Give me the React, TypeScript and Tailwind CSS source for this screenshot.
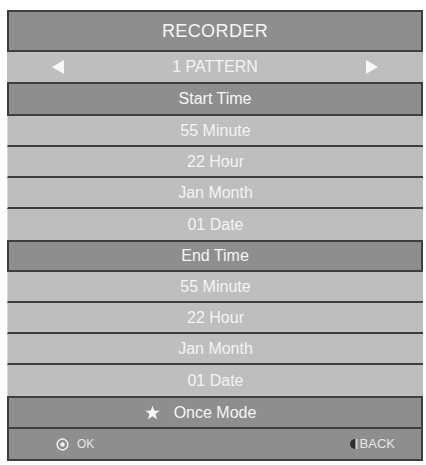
import React from 'react';

const startRows = ['55 Minute', '22 Hour', 'Jan Month', '01 Date'];
const endRows = ['55 Minute', '22 Hour', 'Jan Month', '01 Date'];

const LightRow = ({ label, last }: { label: string; last?: boolean }) => (
  <div
    className={`h-[31px] flex items-center justify-center bg-[#bebebe] border-l border-[#d8d8d8] text-[16px] text-[#f4f4f4] ${
      last ? '' : 'border-b-2 border-b-[#3c3c3c]'
    }`}
  >
    {label}
  </div>
);

const DarkRow = ({ children, h, noTop }: { children: React.ReactNode; h: string; noTop?: boolean }) => (
  <div
    className={`${h} flex items-center justify-center bg-[#8e8e8e] border-2 border-[#3e3e3e] text-[16px] text-[#f6f6f6] ${
      noTop ? 'border-t-0' : ''
    }`}
  >
    {children}
  </div>
);

const App = () => {
  return (
    <div className="w-[426px] h-[465px] bg-white pt-[10px] pl-[7px]" style={{ fontFamily: '"Liberation Sans", Arial, sans-serif' }}>
      <div className="w-[416px] flex flex-col">
        <DarkRow h="h-[42px]">
          <span className="text-[18px] tracking-[0.4px]">RECORDER</span>
        </DarkRow>

        <div className="h-[30px] flex items-center justify-between px-[45px] bg-[#bebebe] text-[16px] text-[#f4f4f4]">
          <svg width="12" height="14" viewBox="0 0 12 14">
            <polygon points="12,0 12,14 0,7" fill="#f8f8f8" />
          </svg>
          <span>1 PATTERN</span>
          <svg width="12" height="14" viewBox="0 0 12 14">
            <polygon points="0,0 0,14 12,7" fill="#f8f8f8" />
          </svg>
        </div>

        <DarkRow h="h-[34px]">Start Time</DarkRow>
        {startRows.map((r, i) => (
          <LightRow key={i} label={r} last={i === startRows.length - 1} />
        ))}

        <DarkRow h="h-[32px]">End Time</DarkRow>
        {endRows.map((r, i) => (
          <LightRow key={i} label={r} last={i === endRows.length - 1} />
        ))}

        <DarkRow h="h-[33px]">
          <span className="flex items-center gap-[14px] pr-[29px]">
            <svg width="15" height="15" viewBox="0 0 24 24">
              <polygon
                points="12,1 15,9 23.5,9.2 16.8,14.4 19.2,22.6 12,17.8 4.8,22.6 7.2,14.4 0.5,9.2 9,9"
                fill="#f8f8f8"
              />
            </svg>
            Once Mode
          </span>
        </DarkRow>

        <div className="h-[32px] flex items-center justify-between pl-[47px] pr-[26px] bg-[#8e8e8e] border-2 border-t-0 border-[#3e3e3e] text-[12px] text-[#e6e6e6]">
          <span className="flex items-center gap-[8px]">
            <svg width="13" height="13" viewBox="0 0 14 14">
              <circle cx="7" cy="7" r="5.8" fill="none" stroke="#f2f2f2" strokeWidth="1.6" />
              <circle cx="7" cy="7" r="2.4" fill="#f2f2f2" />
            </svg>
            OK
          </span>
          <span className="flex items-center gap-[2px] text-[13px]">
            <svg width="8" height="10" viewBox="0 0 8 10">
              <path d="M5 0 A5 5 0 0 0 5 10 Z" fill="#2e2e2e" />
              <rect x="6" y="0" width="1.5" height="10" fill="#cfcfcf" />
            </svg>
            BACK
          </span>
        </div>
      </div>
    </div>
  );
};

export default App;
